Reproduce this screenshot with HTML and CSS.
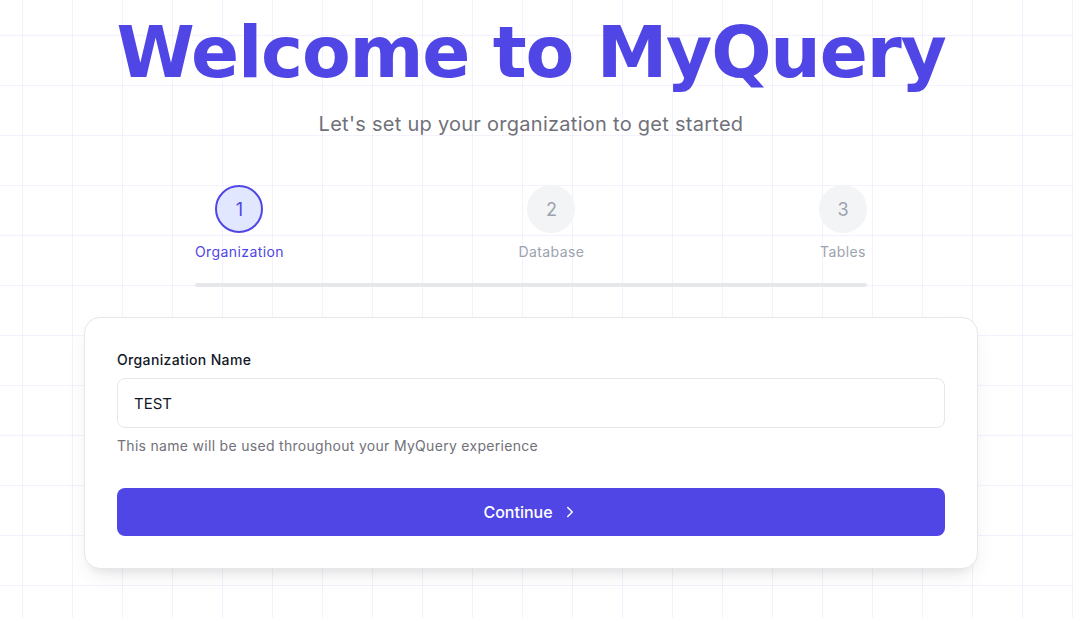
FILE: index.html
```html
<!DOCTYPE html>
<html lang="en">
<head>
<meta charset="utf-8">
<title>Welcome to MyQuery</title>
<link rel="stylesheet" href="styles.css">
</head>
<body>
<main class="page">
  <h1 class="title">Welcome to MyQuery</h1>
  <p class="subtitle">Let's set up your organization to get started</p>

  <div class="steps-wrap">
    <ol class="steps">
      <li class="step active">
        <span class="step-circle">1</span>
        <span class="step-label">Organization</span>
      </li>
      <li class="step">
        <span class="step-circle">2</span>
        <span class="step-label">Database</span>
      </li>
      <li class="step">
        <span class="step-circle">3</span>
        <span class="step-label">Tables</span>
      </li>
    </ol>
    <div class="progress"></div>
  </div>

  <section class="card">
    <label class="field-label" for="org">Organization Name</label>
    <input class="field-input" id="org" type="text" value="TEST">
    <p class="field-help">This name will be used throughout your MyQuery experience</p>
    <button class="btn" type="button">
      <span>Continue</span>
      <svg class="chev" width="18" height="18" viewBox="0 0 24 24" fill="none" stroke="currentColor" stroke-width="2" stroke-linecap="round" stroke-linejoin="round"><path d="m9 18 6-6-6-6"/></svg>
    </button>
  </section>
</main>
</body>
</html>
```

FILE: styles.css
```css
* { box-sizing: border-box; }

html, body { height: 100%; }

body {
  margin: 0;
  padding-right: 11px;
  font-family: Inter, "Noto Sans", sans-serif;
  color: #111827;
  background-color: #ffffff;
  background-image:
    linear-gradient(to right, rgba(79, 70, 229, 0.07) 1px, transparent 1px),
    linear-gradient(to bottom, rgba(79, 70, 229, 0.07) 1px, transparent 1px);
  background-size: 50px 50px;
  background-position: 22px 35px;
  overflow: hidden;
}

.page {
  max-width: 894px;
  margin: 0 auto;
  display: flex;
  flex-direction: column;
  align-items: center;
}

.title {
  margin: 17px 0 0;
  font-family: "DejaVu Sans", sans-serif;
  font-weight: 700;
  font-size: 71px;
  line-height: 71px;
  letter-spacing: -1.2px;
  color: #4f46e5;
  white-space: nowrap;
}

.subtitle {
  margin: 22px 0 0;
  font-size: 20px;
  line-height: 28px;
  letter-spacing: 0.27px;
  color: #71717a;
}

.steps-wrap {
  width: 672px;
  margin-top: 47px;
}

.steps {
  list-style: none;
  margin: 0;
  padding: 0;
  display: flex;
  justify-content: space-between;
}

.step {
  display: flex;
  flex-direction: column;
  align-items: center;
  gap: 11px;
}

.step-circle {
  width: 48px;
  height: 48px;
  border-radius: 50%;
  background: #f3f4f6;
  color: #9ca3af;
  font-size: 18px;
  display: flex;
  align-items: center;
  justify-content: center;
}

.step-label {
  font-size: 14px;
  line-height: 16px;
  letter-spacing: 0.4px;
  color: #9ca3af;
}

.step.active .step-circle {
  background: #e0e7ff;
  border: 2px solid #4f46e5;
  color: #4f46e5;
}

.step.active .step-label {
  color: #4f46e5;
}

.progress {
  margin-top: 23px;
  height: 4px;
  border-radius: 2px;
  background: #e5e7eb;
}

.card {
  width: 894px;
  margin-top: 30px;
  padding: 32px;
  background: #ffffff;
  border: 1px solid #e5e7eb;
  border-radius: 16px;
  box-shadow: 0 10px 25px -5px rgba(0, 0, 0, 0.08), 0 8px 10px -6px rgba(0, 0, 0, 0.08);
  display: flex;
  flex-direction: column;
}

.field-label {
  font-size: 14px;
  line-height: 20px;
  font-weight: 500;
  letter-spacing: 0.35px;
  color: #111827;
}

.field-input {
  margin-top: 8px;
  height: 50px;
  padding: 0 16px;
  border: 1px solid #e5e7eb;
  border-radius: 8px;
  font-family: inherit;
  font-size: 15px;
  color: #111827;
  background: #fff;
  outline: none;
}

.field-help {
  margin: 8px 0 0;
  font-size: 14px;
  line-height: 20px;
  letter-spacing: 0.3px;
  color: #71717a;
}

.btn {
  margin-top: 32px;
  height: 48px;
  border: 0;
  border-radius: 8px;
  background: #4f46e5;
  color: #ffffff;
  font-family: inherit;
  font-size: 16px;
  font-weight: 500;
  display: flex;
  align-items: center;
  justify-content: center;
  gap: 8px;
  cursor: pointer;
}

.chev { display: block; }
```
